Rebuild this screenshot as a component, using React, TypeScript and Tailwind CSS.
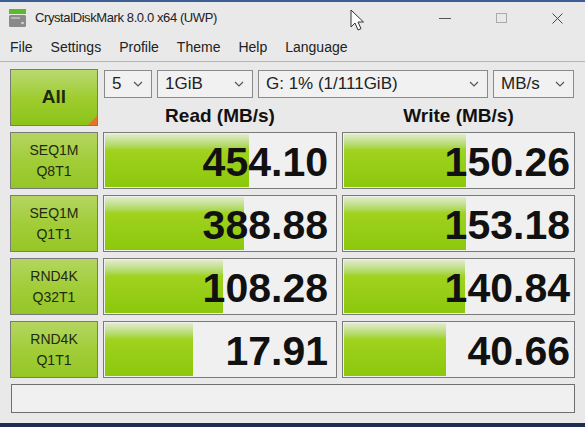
import React from 'react';

// CrystalDiskMark main window
const font = "font-['Liberation_Sans','DejaVu_Sans',sans-serif]";

type Row = { a: string; b: string; read: string; write: string; rw: number; ww: number };

const rows: Row[] = [
  { a: 'SEQ1M', b: 'Q8T1', read: '454.10', write: '150.26', rw: 62, ww: 53 },
  { a: 'SEQ1M', b: 'Q1T1', read: '388.88', write: '153.18', rw: 60, ww: 53 },
  { a: 'RND4K', b: 'Q32T1', read: '108.28', write: '140.84', rw: 51, ww: 52.5 },
  { a: 'RND4K', b: 'Q1T1', read: '17.91', write: '40.66', rw: 38, ww: 44 },
];

const Chevron = () => (
  <svg width="10" height="6" viewBox="0 0 10 6" className="shrink-0">
    <path d="M1 1l4 4 4-4" fill="none" stroke="#555" strokeWidth="1.2" />
  </svg>
);

const Select = ({ label, w }: { label: string; w: string }) => (
  <div className={`${w} h-[28px] border border-[#8a8a8a] bg-[#f1f1f1] flex items-center justify-between pl-[7px] pr-[8px] text-[17px] text-[#222]`}>
    <span>{label}</span>
    <Chevron />
  </div>
);

const Bar = ({ width }: { width: number }) => (
  <div
    className="absolute left-[1px] top-[1px] bottom-[1px] bg-gradient-to-b from-[#e2ebcc] via-[#a0d21e] via-30% to-[#8cc80a]"
    style={{ width: `${width}%` }}
  />
);

export default function App() {
  return (
    <div className={`relative w-[585px] h-[427px] bg-[#e9e9e9] overflow-hidden ${font}`}>
      <div className="h-[2px] bg-[#3c5f96]" />

      {/* title bar */}
      <div className="h-[32px] flex items-center pl-[9px]">
        <svg width="17" height="18" viewBox="0 0 17 18">
          <rect x="0" y="0" width="17" height="5" fill="#5cb82c" />
          <rect x="0" y="6" width="17" height="12" rx="1.5" fill="#8a8a8a" />
          <rect x="2" y="8" width="9" height="2" fill="#b5b5b5" />
          <circle cx="13.5" cy="14" r="1.3" fill="#d8d8d8" />
        </svg>
        <span className="ml-[9px] text-[13px] tracking-[-0.4px] text-[#222]">CrystalDiskMark 8.0.0 x64 (UWP)</span>
        <div className="ml-auto flex items-center h-full">
          <div className="w-[56px] flex justify-center">
            <div className="w-[12px] h-[1px] bg-[#555]" />
          </div>
          <div className="w-[56px] flex justify-center">
            <div className="w-[11px] h-[10px] border border-[#aaa]" />
          </div>
          <div className="w-[56px] flex justify-center">
            <svg width="11" height="11" viewBox="0 0 11 11">
              <path d="M0.5 0.5l10 10M10.5 0.5l-10 10" stroke="#444" strokeWidth="1" />
            </svg>
          </div>
        </div>
      </div>

      {/* menu */}
      <div className="h-[28px] flex items-center gap-[18px] pl-[10px] text-[14px] text-[#222] border-b border-[#b4b4b4]">
        <span>File</span>
        <span>Settings</span>
        <span>Profile</span>
        <span>Theme</span>
        <span>Help</span>
        <span>Language</span>
      </div>

      {/* main grid */}
      <div className="grid grid-cols-[88px_234px_233px] gap-x-[5px] gap-y-[6px] px-[10px] pt-[7px]">
        <div className="relative h-[57px] border border-[#7a7a7a] bg-gradient-to-b from-[#b9d96e] via-[#9fcd2e] to-[#8bc318] flex items-center justify-center text-[19px] font-bold text-[#1c2a0c]">
          All
          <div className="absolute right-0 bottom-0 w-0 h-0 border-l-[9px] border-l-transparent border-b-[9px] border-b-[#e8742a]" />
        </div>
        <div className="col-span-2 flex flex-col">
          <div className="flex gap-[5px] ml-[1px] mt-[1px]">
            <Select label="5" w="w-[48px]" />
            <Select label="1GiB" w="w-[96px]" />
            <Select label="G: 1% (1/111GiB)" w="w-[230px]" />
            <Select label="MB/s" w="w-[81px]" />
          </div>
          <div className="flex mt-auto text-[19px] font-bold text-[#111] leading-none pb-[1px]">
            <div className="w-[234px] text-center">Read (MB/s)</div>
            <div className="w-[5px]" />
            <div className="w-[233px] text-center">Write (MB/s)</div>
          </div>
        </div>

        {rows.map((r, i) => (
          <React.Fragment key={i}>
            <div className="h-[57px] border border-[#7a7a7a] bg-gradient-to-b from-[#b4d560] via-[#a2cd38] to-[#95c626] flex flex-col items-center justify-center gap-[7px] text-[14px] leading-none text-[#1e2a10]">
              <span>{r.a}</span>
              <span>{r.b}</span>
            </div>
            <div className="relative h-[57px] border border-[#7a7a7a] bg-[#f0f0f0] flex items-center justify-end pr-[8px]">
              <Bar width={r.rw} />
              <span className="relative text-[41px] font-bold text-[#111] leading-none mt-[4px]">{r.read}</span>
            </div>
            <div className="relative h-[57px] border border-[#7a7a7a] bg-[#f0f0f0] flex items-center justify-end pr-[4px]">
              <Bar width={r.ww} />
              <span className="relative text-[41px] font-bold text-[#111] leading-none mt-[4px]">{r.write}</span>
            </div>
          </React.Fragment>
        ))}

        <div className="col-span-3 h-[29px] border border-[#6e6e6e] bg-[#f0f0f0] ml-[1px]" />
      </div>

      <div className="absolute left-0 right-0 bottom-0 h-[4px] bg-[#1f2d52]" />

      {/* mouse pointer over title bar */}
      <svg className="absolute left-[350px] top-[9px]" width="15" height="22" viewBox="0 0 15 22">
        <path d="M1 1v17l4-4 3 7 3-1.3-3-6.7h5.5z" fill="#fff" stroke="#333" strokeWidth="1" strokeLinejoin="round" />
      </svg>
    </div>
  );
}
